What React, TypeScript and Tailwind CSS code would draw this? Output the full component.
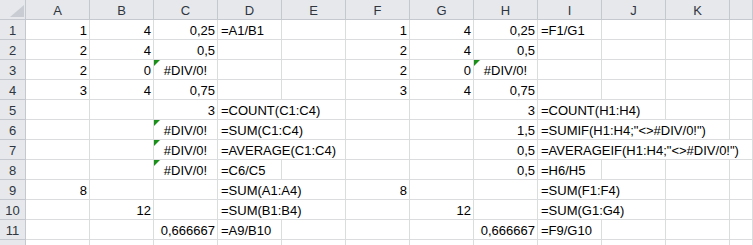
import React from "react";

type Cell = {
  v: string;
  align?: "r" | "l" | "c";
  span?: number;
  err?: boolean;
};

// one entry per row, keyed by column index (0 = A ... 11 = L)
const rows: Record<number, Cell>[] = [
  { 0: { v: "1" }, 1: { v: "4" }, 2: { v: "0,25" }, 3: { v: "=A1/B1", align: "l" }, 5: { v: "1" }, 6: { v: "4" }, 7: { v: "0,25" }, 8: { v: "=F1/G1", align: "l" } },
  { 0: { v: "2" }, 1: { v: "4" }, 2: { v: "0,5" }, 5: { v: "2" }, 6: { v: "4" }, 7: { v: "0,5" } },
  { 0: { v: "2" }, 1: { v: "0" }, 2: { v: "#DIV/0!", align: "c", err: true }, 5: { v: "2" }, 6: { v: "0" }, 7: { v: "#DIV/0!", align: "c", err: true } },
  { 0: { v: "3" }, 1: { v: "4" }, 2: { v: "0,75" }, 5: { v: "3" }, 6: { v: "4" }, 7: { v: "0,75" } },
  { 2: { v: "3" }, 3: { v: "=COUNT(C1:C4)", align: "l", span: 2 }, 7: { v: "3" }, 8: { v: "=COUNT(H1:H4)", align: "l", span: 2 } },
  { 2: { v: "#DIV/0!", align: "c", err: true }, 3: { v: "=SUM(C1:C4)", align: "l", span: 2 }, 7: { v: "1,5" }, 8: { v: '=SUMIF(H1:H4;"<>#DIV/0!")', align: "l", span: 3 } },
  { 2: { v: "#DIV/0!", align: "c", err: true }, 3: { v: "=AVERAGE(C1:C4)", align: "l", span: 2 }, 7: { v: "0,5" }, 8: { v: '=AVERAGEIF(H1:H4;"<>#DIV/0!")', align: "l", span: 4 } },
  { 2: { v: "#DIV/0!", align: "c", err: true }, 3: { v: "=C6/C5", align: "l" }, 7: { v: "0,5" }, 8: { v: "=H6/H5", align: "l" } },
  { 0: { v: "8" }, 3: { v: "=SUM(A1:A4)", align: "l", span: 2 }, 5: { v: "8" }, 8: { v: "=SUM(F1:F4)", align: "l", span: 2 } },
  { 1: { v: "12" }, 3: { v: "=SUM(B1:B4)", align: "l", span: 2 }, 6: { v: "12" }, 8: { v: "=SUM(G1:G4)", align: "l", span: 2 } },
  { 2: { v: "0,666667" }, 3: { v: "=A9/B10", align: "l" }, 7: { v: "0,666667" }, 8: { v: "=F9/G10", align: "l" } },
  {},
];

const letters = ["A", "B", "C", "D", "E", "F", "G", "H", "I", "J", "K", ""];

const spanCls: Record<number, string> = {
  1: "",
  2: "col-span-2",
  3: "col-span-3",
  4: "col-span-4",
};

function ErrorMark() {
  return (
    <svg className="absolute left-0 top-0" width="6" height="6" viewBox="0 0 6 6">
      <polygon points="0,0 6,0 0,6" fill="#1a8f1a" />
    </svg>
  );
}

function Row({ cells, n }: { cells: Record<number, Cell>; n: number }) {
  const out: React.ReactNode[] = [];
  let c = 0;
  while (c < 12) {
    const cell = cells[c];
    const span = cell?.span ?? 1;
    const align =
      cell?.align === "l" ? "justify-start pl-[3px]" : cell?.align === "c" ? "justify-center" : "justify-end pr-[2px]";
    out.push(
      <div
        key={c}
        className={`relative flex items-center ${align} ${spanCls[span]} h-[20px] border-r border-b border-[#dadcdd] bg-white pt-[1px] whitespace-nowrap text-black`}
      >
        {cell?.err && <ErrorMark />}
        {cell?.v}
      </div>
    );
    c += span;
  }
  return (
    <>
      <div className="flex h-[20px] items-center justify-center border-r border-b border-[#c5c9cf] bg-[#e6e8ec] pt-[1px] text-[#2f3640]">
        {/* row 12 is only a sliver at the bottom edge, its number is out of view */}
        {n <= 11 ? n : ""}
      </div>
      {out}
    </>
  );
}

export default function App() {
  return (
    <div className="h-[245px] w-[753px] overflow-hidden bg-white font-['Liberation_Sans',Arial,sans-serif] text-[13px] leading-[19px]">
      <div className="grid grid-cols-[26px_repeat(11,64px)_23px]">
        <div className="relative h-[20px] border-r border-b border-[#c5c9cf] bg-[#e6e8ec]">
          <svg className="absolute left-[10px] top-[5px]" width="14" height="12" viewBox="0 0 14 12">
            <polygon points="14,0 14,12 0,12" fill="#c9cdd3" />
          </svg>
        </div>
        {letters.map((l, i) => (
          <div
            key={i}
            className="flex h-[20px] items-center justify-center border-r border-b border-[#c5c9cf] bg-[#e6e8ec] pt-[1px] text-[#2f3640]"
          >
            {l}
          </div>
        ))}
        {rows.map((r, i) => (
          <Row key={i} cells={r} n={i + 1} />
        ))}
      </div>
    </div>
  );
}
